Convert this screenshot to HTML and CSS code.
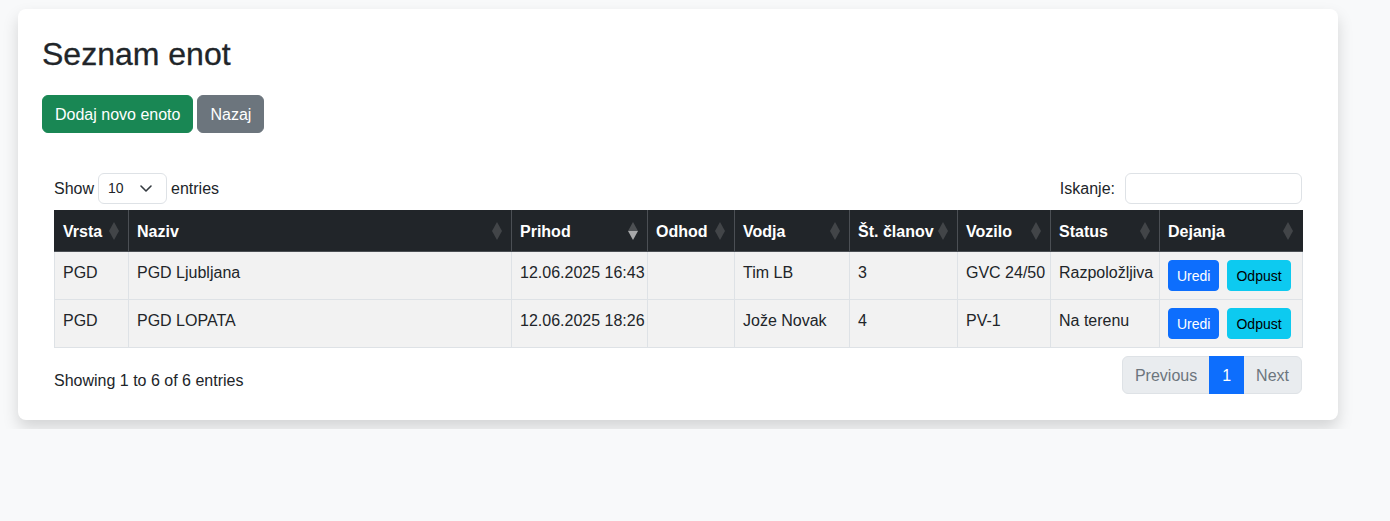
FILE: index.html
```html
<!DOCTYPE html>
<html lang="sl">
<head>
<meta charset="utf-8">
<title>Seznam enot</title>
<link rel="stylesheet" href="styles.css">
</head>
<body>
<div class="page">
  <div class="card">
    <h2 class="title">Seznam enot</h2>
    <div class="actions">
      <a class="btn btn-success">Dodaj novo enoto</a>
      <a class="btn btn-secondary">Nazaj</a>
    </div>

    <div class="dt-wrapper">
      <div class="dt-top">
        <label class="dt-length">Show
          <span class="select-sm">10
            <svg class="chev" width="14" height="9" viewBox="0 0 14 9"><path d="M2 2l5 5 5-5" fill="none" stroke="#343a40" stroke-width="1.6" stroke-linecap="round" stroke-linejoin="round"/></svg>
          </span>
          entries</label>
        <label class="dt-filter">Iskanje: <span class="input-sm"></span></label>
      </div>

      <table class="dt-table">
        <thead>
          <tr>
            <th class="c-vrsta sorting">Vrsta</th>
            <th class="c-naziv sorting">Naziv</th>
            <th class="c-prihod sorting sorting-desc">Prihod</th>
            <th class="c-odhod sorting">Odhod</th>
            <th class="c-vodja sorting">Vodja</th>
            <th class="c-clani sorting">Št. članov</th>
            <th class="c-vozilo sorting">Vozilo</th>
            <th class="c-status sorting">Status</th>
            <th class="c-dejanja sorting">Dejanja</th>
          </tr>
        </thead>
        <tbody>
          <tr>
            <td>PGD</td>
            <td>PGD Ljubljana</td>
            <td>12.06.2025 16:43</td>
            <td></td>
            <td>Tim LB</td>
            <td>3</td>
            <td>GVC 24/50</td>
            <td>Razpoložljiva</td>
            <td><div class="row-actions"><a class="btn-sm btn-primary">Uredi</a><a class="btn-sm btn-info">Odpust</a></div></td>
          </tr>
          <tr>
            <td>PGD</td>
            <td>PGD LOPATA</td>
            <td>12.06.2025 18:26</td>
            <td></td>
            <td>Jože Novak</td>
            <td>4</td>
            <td>PV-1</td>
            <td>Na terenu</td>
            <td><div class="row-actions"><a class="btn-sm btn-primary">Uredi</a><a class="btn-sm btn-info">Odpust</a></div></td>
          </tr>
        </tbody>
      </table>

      <div class="dt-bottom">
        <div class="dt-info">Showing 1 to 6 of 6 entries</div>
        <ul class="pagination">
          <li class="page-link disabled first">Previous</li>
          <li class="page-link active">1</li>
          <li class="page-link disabled last">Next</li>
        </ul>
      </div>
    </div>
  </div>
</div>
</body>
</html>
```

FILE: styles.css
```css
* { box-sizing: border-box; }

html, body {
  margin: 0;
  padding: 0;
}

body {
  background: #f8f9fa;
  color: #212529;
  font-family: "Liberation Sans", Arial, sans-serif;
  font-size: 16px;
  line-height: 1.5;
}

.page {
  padding: 9px 18px;
}

.card {
  width: 1320px;
  background: #fff;
  border-radius: 8px;
  box-shadow: 0 0.5rem 1rem rgba(0, 0, 0, 0.15);
  padding: 24px;
}

.title {
  margin: 2px 0 22px;
  font-size: 32px;
  font-weight: 500;
  line-height: 1.2;
  color: #212529;
  -webkit-text-stroke: 0.3px #212529;
}

.actions {
  display: flex;
  gap: 4px;
}

.btn {
  display: inline-block;
  padding: 7px 12px 5px;
  font-size: 16px;
  line-height: 24px;
  border: 1px solid transparent;
  border-radius: 6px;
  color: #fff;
}

.btn-success { background: #198754; border-color: #198754; }
.btn-secondary { background: #6c757d; border-color: #6c757d; }

.dt-wrapper {
  margin-top: 40px;
  padding: 0 12px;
}

.dt-top {
  display: flex;
  justify-content: space-between;
  align-items: center;
  height: 31px;
}

.dt-length, .dt-filter {
  display: flex;
  align-items: center;
  gap: 4px;
  font-size: 16px;
}

.dt-filter { gap: 10px; }

.select-sm {
  display: inline-flex;
  align-items: center;
  justify-content: space-between;
  width: 69px;
  height: 31px;
  padding: 0 13px 0 9px;
  border: 1px solid #dee2e6;
  border-radius: 6px;
  font-size: 14px;
  color: #212529;
}

.input-sm {
  display: inline-block;
  width: 177px;
  height: 31px;
  border: 1px solid #dee2e6;
  border-radius: 6px;
  background: #fff;
}

.dt-table {
  width: 100%;
  border-collapse: collapse;
  margin: 6px 0;
  table-layout: fixed;
  border: 1px solid #dee2e6;
}

.dt-table th,
.dt-table td {
  padding: 9px 8px 7px;
  text-align: left;
  vertical-align: top;
  white-space: nowrap;
  overflow: hidden;
}

.dt-table th {
  position: relative;
  background: #212529;
  color: #fff;
  font-weight: 700;
  padding-right: 26px;
  border: 1px solid #4b4f54;
  border-top-color: #212529;
}

.dt-table th:first-child { border-left-color: #212529; }
.dt-table th:last-child { border-right-color: #212529; }

.dt-table td {
  background: #f2f2f2;
  border: 1px solid #dee2e6;
}

.dt-table td:last-child {
  padding: 8px;
}

.c-vrsta { width: 74px; }
.c-naziv { width: 383px; }
.c-prihod { width: 136px; }
.c-odhod { width: 87px; }
.c-vodja { width: 115px; }
.c-clani { width: 108px; }
.c-vozilo { width: 93px; }
.c-status { width: 109px; }
.c-dejanja { width: 143px; }

.sorting::before,
.sorting::after {
  content: "";
  position: absolute;
  right: 9px;
  width: 0;
  height: 0;
  border-left: 5px solid transparent;
  border-right: 5px solid transparent;
  opacity: 0.15;
}

.sorting::before {
  bottom: 50%;
  border-bottom: 9px solid #fff;
}

.sorting::after {
  top: 50%;
  border-top: 9px solid #fff;
}

.sorting-desc::after { opacity: 0.6; }
.sorting-desc::before { opacity: 0.2; }

.row-actions {
  display: flex;
  gap: 8px;
}

.btn-sm {
  display: inline-block;
  padding: 5px 8px 3px;
  font-size: 14px;
  line-height: 21px;
  border: 1px solid transparent;
  border-radius: 4px;
}

.btn-primary { background: #0d6efd; border-color: #0d6efd; color: #fff; }
.btn-info { background: #0dcaf0; border-color: #0dcaf0; color: #000; }

.dt-bottom {
  display: flex;
  justify-content: space-between;
  align-items: flex-start;
}

.dt-info {
  padding-top: 15px;
  font-size: 16px;
}

.pagination {
  display: flex;
  list-style: none;
  margin: 2px 0;
  padding: 0;
}

.page-link {
  padding: 7px 12px 5px;
  font-size: 16px;
  line-height: 24px;
  border: 1px solid #dee2e6;
  margin-left: -1px;
}

.page-link.disabled {
  background: #e9ecef;
  color: #6c757d;
}

.page-link.active {
  background: #0d6efd;
  border-color: #0d6efd;
  color: #fff;
  position: relative;
  z-index: 1;
}

.page-link.first {
  margin-left: 0;
  border-radius: 6px 0 0 6px;
}

.page-link.last {
  border-radius: 0 6px 6px 0;
}
```
